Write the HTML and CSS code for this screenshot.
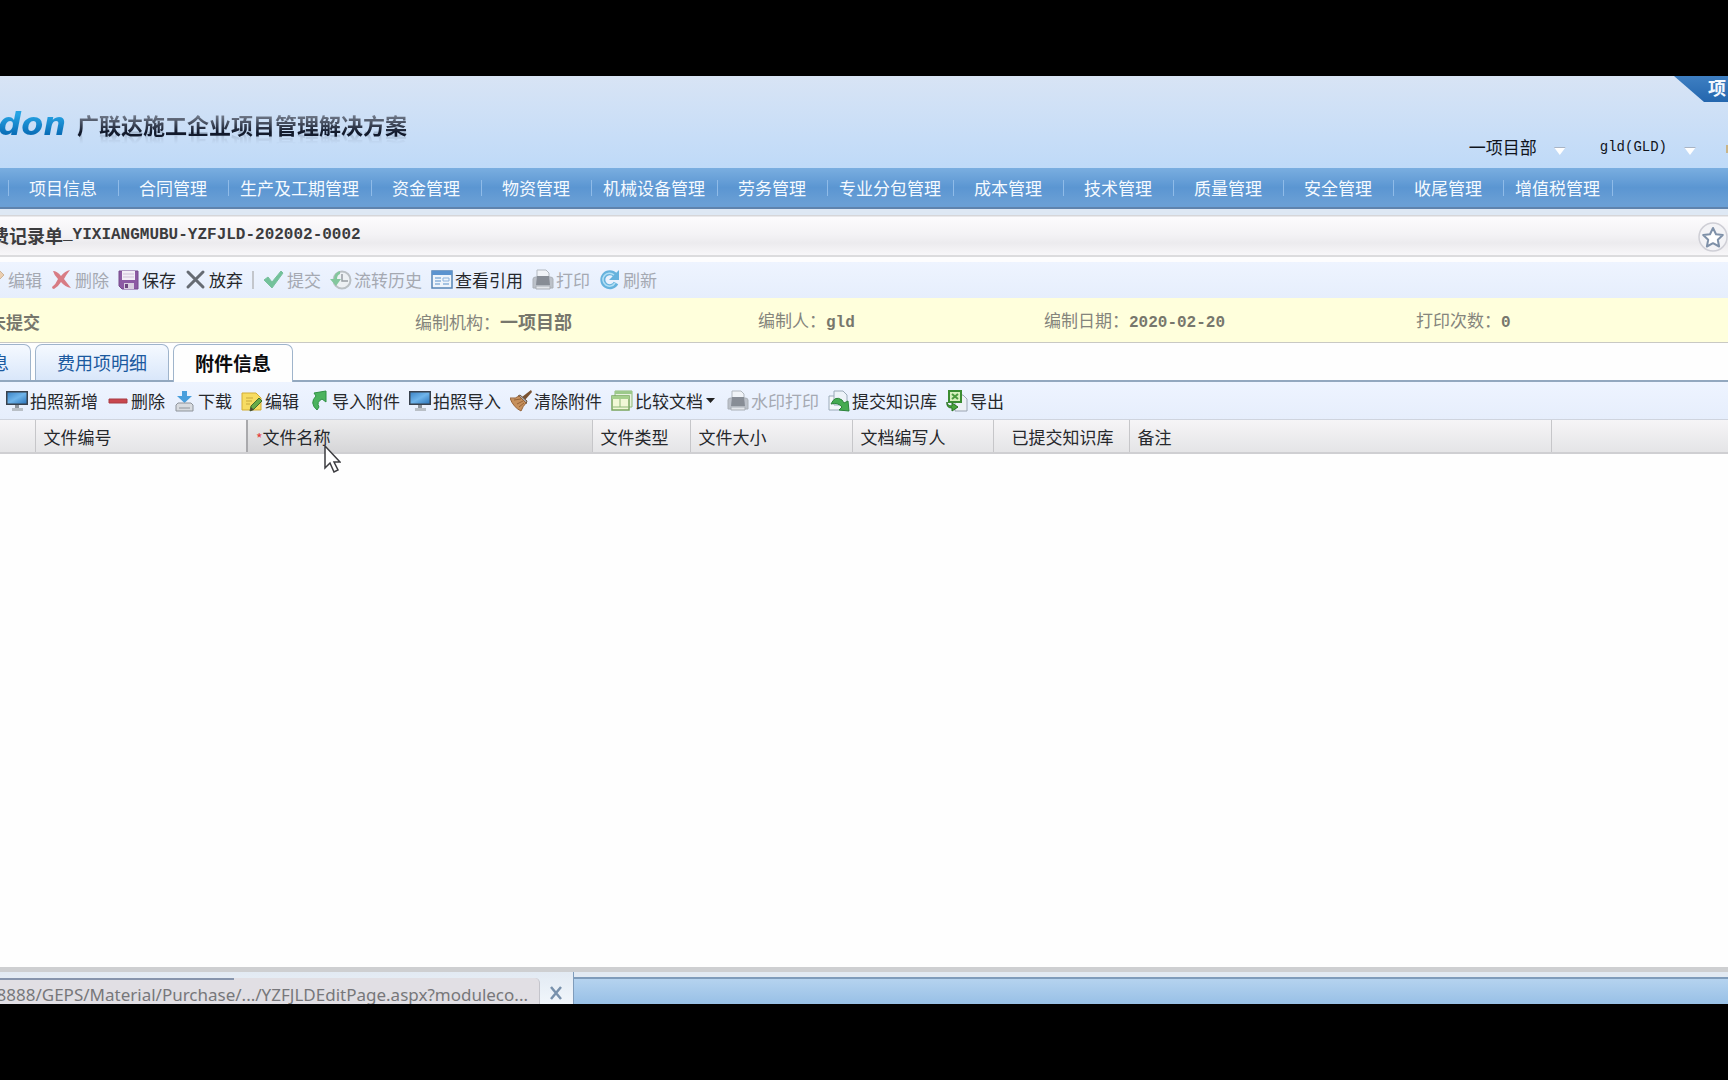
FILE: index.html
```html
<!DOCTYPE html>
<html lang="zh-CN">
<head>
<meta charset="utf-8">
<title>附件信息</title>
<link rel="stylesheet" href="styles.css">
</head>
<body>
<svg class="defs" aria-hidden="true">
  <defs>
    <linearGradient id="screen" x1="0" y1="0" x2="1" y2="1"><stop offset="0" stop-color="#3e86c8"/><stop offset=".5" stop-color="#6fb4ea"/><stop offset="1" stop-color="#2f78bd"/></linearGradient>
    <symbol id="monitor" viewBox="0 0 22 22"><path d="M0 1h22v14H0z" fill="#39424e"/><path d="M1.500 2.500h19v11h-19z" fill="url(#screen)"/><path d="M9 15h4v3H9z" fill="#8d949c"/><path d="M6 18h11v3H6z" fill="#b9bfc6"/></symbol>
    <symbol id="printer" viewBox="0 0 22 22"><path d="M5 1h9l3 3v7H5z" fill="#f2f4f6" stroke="#a9afb5"/><path d="M1 10q0-2 3-2h14q3 0 3 2v9H1z" fill="#b4b9c0" stroke="#a0a5ab"/><path d="M5 7h12l1 9H4z" fill="#777c84"/><path d="M4 17h14v3H4z" fill="#e3e5e8" stroke="#a0a5ab"/></symbol>
  </defs>
</svg>
<div class="app">
  <header class="banner">
    <div class="brand"><span class="logo">Glodon</span><h1>广联达施工企业项目管理解决方案</h1></div>
    <div class="account">
      <button class="pick">一项目部<i class="arrow"></i></button>
      <button class="pick user">gld(GLD)<i class="arrow"></i></button>
      <i class="dot"></i>
    </div>
    <a class="corner" href="#">项</a>
  </header>

  <nav class="menu">
    <a href="#">项目信息</a><a href="#">合同管理</a><a href="#">生产及工期管理</a><a href="#">资金管理</a><a href="#">物资管理</a><a href="#">机械设备管理</a><a href="#">劳务管理</a><a href="#">专业分包管理</a><a href="#">成本管理</a><a href="#">技术管理</a><a href="#">质量管理</a><a href="#">安全管理</a><a href="#">收尾管理</a><a href="#">增值税管理</a>
  </nav>

  <div class="titlebar">
    <h2>费记录单<span class="mono">_YIXIANGMUBU-YZFJLD-202002-0002</span></h2>
    <button class="fav" aria-label="收藏"><svg viewBox="0 0 30 30"><circle cx="15" cy="15" r="14" fill="#f3f3f6" stroke="#cfcfd6" stroke-width="1.500"/><path d="M15 6l3 6.200 6.800.8-5 4.700 1.300 6.800-6.100-3.300-6.100 3.300 1.300-6.800-5-4.700 6.800-.8z" fill="#fff" stroke="#7e90a8" stroke-width="2" stroke-linejoin="round"/></svg></button>
  </div>

  <div class="toolbar main-tools">
    <button disabled><svg viewBox="0 0 22 22"><path d="M4 18l2-6L16 2l4 4-10 10z" fill="#ecc9a4" stroke="#c8a988"/></svg>编辑</button>
    <button disabled><svg viewBox="0 0 22 22"><path d="M2 2q4 0 8 5 4-5 9-6-4 5-6 9 3 4 7 9-6-1-10-6-3 5-7 7-2 0-2-2 4-3 6-8-4-4-5-8z" fill="#d56870"/></svg>删除</button>
    <button><svg viewBox="0 0 22 22"><path d="M1 2h19v18H4l-3-3z" fill="#8c5aa3" stroke="#764a8c"/><path d="M4 2h13v9H4z" fill="#f2edf6"/><path d="M5 5h11M5 8h11" stroke="#cdbfd6"/><path d="M6 14h10v6H6z" fill="#d9cfe0"/><path d="M7 15h3v4H7z" fill="#6d4680"/></svg>保存</button>
    <button><svg viewBox="0 0 22 22"><path d="M3 3l15 15M18 3L3 18" stroke="#666b73" stroke-width="3" stroke-linecap="round"/></svg>放弃</button>
    <span class="sep"></span>
    <button disabled><svg viewBox="0 0 22 22"><path d="M1 11l4-3 4 5 9-11 2 2L9 19z" fill="#5fba8a" stroke="#64b88c"/></svg>提交</button>
    <button disabled><svg viewBox="0 0 22 22"><circle cx="12" cy="11" r="8.500" fill="#eef1f3" stroke="#b2b8bb" stroke-width="2"/><path d="M12 5v7h6" fill="none" stroke="#8a9094" stroke-width="1.500"/><path d="M10 2q-6 2-6 8H0l6 7 5-7H7q0-4 3-5z" fill="#72c08d"/></svg>流转历史</button>
    <button><svg viewBox="0 0 22 22"><path d="M1 2h20v17H1z" fill="#eef4fb" stroke="#5584b5" stroke-width="1.500"/><path d="M1 2h20v4H1z" fill="#5b93cf"/><path d="M4 9h6M4 12h6M4 15h5M12 15h6" stroke="#8bb1da" stroke-width="1.500"/><path d="M12 9h6v3h-6z" fill="none" stroke="#8bb1da"/></svg>查看引用</button>
    <button disabled><svg><use href="#printer"/></svg>打印</button>
    <button disabled><svg viewBox="0 0 22 22"><path d="M16 6a7 7 0 1 0 1 8" fill="none" stroke="#4fa8d8" stroke-width="5"/><path d="M20 1v10H10z" fill="#4fa8d8"/><path d="M15 6a6.500 6.500 0 1 0 1 8" fill="none" stroke="#a9dcf3" stroke-width="1.500"/></svg>刷新</button>
  </div>

  <div class="record">
    <div class="state"><b>未提交</b></div>
    <div>编制机构：<b class="org">一项目部</b></div>
    <div>编制人：<b class="mono">gld</b></div>
    <div>编制日期：<b class="mono">2020-02-20</b></div>
    <div>打印次数：<b class="mono">0</b></div>
  </div>

  <div class="tabs" role="tablist">
    <button class="tab first" role="tab">基本信息</button>
    <button class="tab" role="tab">费用项明细</button>
    <button class="tab active" role="tab" aria-selected="true">附件信息</button>
  </div>

  <div class="toolbar file-tools">
    <button><svg><use href="#monitor"/></svg>拍照新增</button>
    <button><svg viewBox="0 0 22 22"><path d="M2 9h18v4H2z" fill="#c9474f" stroke="#a93c45"/></svg>删除</button>
    <button><svg viewBox="0 0 22 22"><path d="M8 1h5v5h5l-7.500 7L3 6h5z" fill="#4a9fdc"/><path d="M2 15l2-2h13l2 2v6H2z" fill="#d8dbdf" stroke="#8e949b"/><path d="M5 18h11" stroke="#8e949b"/></svg>下载</button>
    <button><svg viewBox="0 0 22 22"><path d="M1 3h14l5 5v12H1z" fill="#f7dc62" stroke="#d3ad35"/><path d="M5 8h7M5 11h6M5 14h4" stroke="#c9a83c"/><path d="M9 21l1-5 8-8 3 3-8 8z" fill="#67ab48" stroke="#3f6e2f"/><path d="M9 21l1-4 3 3z" fill="#4b4335"/></svg>编辑</button>
    <button><svg viewBox="0 0 22 22"><path d="M9 20q-8-7-1-14L6 3l12-2v11l-4-3q-6 3-3 8z" fill="#4cb35e" stroke="#2f9144"/></svg>导入附件</button>
    <button><svg><use href="#monitor"/></svg>拍照导入</button>
    <button><svg viewBox="0 0 22 22"><path d="M21 0l1 2-7 8-3-3z" fill="#7a5231"/><path d="M10 5l7 6-1 3-8-8z" fill="#a9a9ae" stroke="#6f563f"/><path d="M0 8q6 1 9-2l7 7q-3 3-5 8Q3 17 0 8z" fill="#c6905c" stroke="#966338"/><path d="M4 10l7-1M7 14l6-3M9 17l5-4" stroke="#966338"/></svg>清除附件</button>
    <button><svg viewBox="0 0 22 22"><path d="M4 1h17v16H4z" fill="#e7f2df" stroke="#8fb879"/><path d="M4 1h17v3H4z" fill="#9cc98a"/><path d="M1 6h17v14H1z" fill="#f1f8d6" stroke="#79a55f" stroke-width="1.500"/><path d="M1 6h17v3H1z" fill="#a5cf8c"/><path d="M9 9v8M1 17h17" stroke="#8fb879"/></svg>比较文档<i class="drop"></i></button>
    <button disabled><svg><use href="#printer"/></svg>水印打印</button>
    <button><svg viewBox="0 0 22 22"><path d="M1 6h14v14H1z" fill="#f5f8fa" stroke="#9aaab8"/><path d="M6 1h9l4 4v10H6z" fill="#edf3f9" stroke="#9aaab8"/><path d="M3 14q4-9 11-4l2 3 4-2 1 10-10-1 3-3q-4-5-11-3z" fill="#45ab51" stroke="#2c843a"/></svg>提交知识库</button>
    <button><svg viewBox="0 0 22 22"><path d="M9 5h8l4 4v12H9z" fill="#eef1f6" stroke="#9aa4b2"/><path d="M3 1h12v11H3z" fill="#d8f0bd" stroke="#3b8c32" stroke-width="2"/><path d="M6 4l6 5M12 4L6 9" stroke="#4c9a3e" stroke-width="2"/><path d="M1 12q0 4 5 4v-3l6 4-6 4v-3q-6 0-5-6z" fill="#49a63c" stroke="#26701f"/></svg>导出</button>
  </div>

  <table class="files">
    <colgroup><col class="w-pick"><col class="w-code"><col class="w-name"><col class="w-type"><col class="w-size"><col class="w-author"><col class="w-kb"><col class="w-note"><col></colgroup>
    <thead><tr><th></th><th>文件编号</th><th class="hover"><span class="req">*</span>文件名称</th><th>文件类型</th><th>文件大小</th><th>文档编写人</th><th class="right">已提交知识库</th><th>备注</th><th></th></tr></thead>
  </table>
  <main class="blank"></main>

  <footer class="dock">
    <div class="page-tab"><button aria-label="关闭"><svg viewBox="0 0 14 14"><path d="M2 1l10 12M12 1L2 13" stroke="#7891ac" stroke-width="2.500"/></svg></button></div>
    <div class="status"><span>localhost:8888/GEPS/Material/Purchase/.../YZFJLDEditPage.aspx?moduleco...</span></div>
  </footer>

  <svg class="cursor" viewBox="0 0 17 28"><path d="M1 1v22l5-5 4 9 4-2-4-8h6z" fill="#fff" stroke="#3c3c40" stroke-width="1.500"/></svg>
</div>
</body>
</html>
```
FILE: styles.css
```css
* { box-sizing: border-box; }
body {
  margin: 0;
  min-height: 100vh;
  padding: 76px 0;
  display: flex;
  background: #000;
  color: #26282c;
  font: 17px/24px "Noto Sans CJK SC", sans-serif;
  overflow: hidden;
}
button {
  font: inherit;
  color: inherit;
  background: none;
  border: 0;
  padding: 0;
  white-space: nowrap;
}
a { color: inherit; text-decoration: none; }
h1, h2 { margin: 0; }
.defs { position: absolute; width: 0; height: 0; }
.mono { font-family: "Liberation Mono", monospace; font-size: 16px; }
.app {
  position: relative;
  flex: 1;
  min-width: 0;
  display: flex;
  flex-direction: column;
  background: #fefefe;
  overflow: hidden;
}

/* Banner */
.banner {
  position: relative;
  height: 92px;
  display: flex;
  justify-content: space-between;
  background: linear-gradient(#d8e4f5, #bfdaf8);
}
.brand {
  display: flex;
  align-items: center;
  gap: 11px;
  margin-left: -64px;
  padding-top: 4px;
}
.logo {
  width: 130px;
  display: flex;
  justify-content: flex-end;
  font: italic bold 32px/32px "DejaVu Sans", sans-serif;
  color: transparent;
  background: linear-gradient(#27a4e4 20%, #0a6fb8 80%);
  background-clip: text;
}
.brand h1 {
  font-size: 22px;
  line-height: 32px;
  color: transparent;
  background: linear-gradient(#788191 20%, #121a2c 75%);
  background-clip: text;
  -webkit-box-reflect: below -12px linear-gradient(transparent 50%, rgba(0, 0, 0, .25));
}
.account {
  display: flex;
  align-items: flex-end;
  gap: 34px;
  padding-bottom: 9px;
  color: #10141c;
}
.pick { display: flex; align-items: center; gap: 17px; }
.user { font: 14px/24px "Liberation Mono", monospace; }
.arrow {
  width: 12px;
  height: 8px;
  margin-top: 8px;
  background: #fff;
  border-top: 1px solid #a9b4c4;
  clip-path: polygon(0 0, 100% 0, 50% 100%);
}
.dot { width: 2px; height: 8px; margin: 0 0 6px -4px; background: #c9b487; }
.corner {
  position: absolute;
  top: 0;
  right: 0;
  width: 54px;
  height: 26px;
  padding-left: 34px;
  overflow: hidden;
  font-weight: bold;
  font-size: 18px;
  line-height: 22px;
  color: #f2f8ff;
  background: linear-gradient(#3e7fc2, #2466ae);
  clip-path: polygon(0 0, 100% 0, 100% 100%, 30px 100%);
}

/* Module menu */
.menu {
  height: 41px;
  display: flex;
  align-items: center;
  padding-left: 8px;
  background: linear-gradient(#7aaee0, #5b96d2 50%, #6a9fd5 90%);
  border-bottom: 2px solid #5f83ad;
  color: #f5faff;
}
.menu a {
  min-width: 110px;
  height: 16px;
  padding: 0 12px 0 11px;
  line-height: 16px;
  text-align: center;
  white-space: nowrap;
  border-left: 1px solid #8fbbe8;
}
.menu a:last-child { border-right: 1px solid #8fbbe8; }

/* Document title */
.titlebar {
  height: 48px;
  display: flex;
  align-items: center;
  justify-content: space-between;
  padding-top: 3px;
  border-top: 6px solid #dee8f4;
  border-bottom: 2px solid #dcdcde;
  background: linear-gradient(#d6d6d9 1px, #fcfbfd 2px, #f3f2f5 50%, #ecebee 70%, #f8f7f9);
  color: #3c3c3e;
}
.titlebar h2 {
  display: flex;
  font-size: 18px;
  line-height: 24px;
  margin: -3px 0 0 -9px;
}
.fav { width: 30px; height: 30px; }
.fav svg { display: block; }

/* Toolbars */
.toolbar {
  display: flex;
  align-items: center;
  gap: 9px;
  background: linear-gradient(#eef4ff, #e6eefc);
}
.main-tools {
  height: 41px;
  border-top: 5px solid #fdfdfe;
}
.main-tools button:first-child { margin-left: -16px; }
.file-tools { height: 38px; padding-left: 6px; border-bottom: 1px solid #cfd4de; }
.toolbar button { display: flex; align-items: center; gap: 2px; }
.toolbar button:disabled { color: #a5a9b2; }
.toolbar svg { width: 22px; height: 22px; }
.toolbar button:disabled svg { opacity: .85; }
.sep { width: 2px; height: 18px; background: #c3c6cc; }
.drop {
  width: 9px;
  height: 5px;
  margin: 0 3px 0 1px;
  background: #222;
  clip-path: polygon(0 0, 100% 0, 50% 100%);
}

/* Record summary */
.record {
  height: 45px;
  padding-top: 3px;
  display: grid;
  grid-template-columns: 415fr 343fr 286fr 372fr 312fr;
  align-items: center;
  background: #ffffdc;
  border-bottom: 1px solid #c9c9c4;
  color: #85857c;
}
.record b { color: #77776c; }
.record .org { font-size: 18px; }
.state { margin-left: -11px; }

/* Tabs */
.tabs {
  height: 39px;
  display: flex;
  gap: 4px;
  padding-top: 1px;
  border-bottom: 2px solid #93a8bf;
}
.tab {
  height: 36px;
  padding: 0 21px 2px;
  font-size: 18px;
  color: #1c5a9f;
  background: linear-gradient(#f5f9ff, #d9e7fa);
  border: 1px solid #9fb4cb;
  border-bottom: 0;
  border-radius: 7px 7px 0 0;
}
.first { margin-left: -85px; }
.active {
  height: 38px;
  font-size: 19px;
  font-weight: bold;
  color: #0c0c0e;
  background: #fefefe;
}

/* File list */
.files {
  width: 100%;
  table-layout: fixed;
  border-collapse: collapse;
}
.files tr { background: linear-gradient(#f6f5f7, #e4e4e6); }
.files th {
  height: 33px;
  padding: 2px 8px 0;
  font-weight: normal;
  text-align: left;
  white-space: nowrap;
  border-right: 1px solid #c6c6c9;
  border-bottom: 2px solid #cfcfd2;
}
.files th:last-child { border-right: 0; }
.files .hover { background: linear-gradient(#ececed, #d6d6d8); border-left: 2px solid #a9a9ac; }
.files .right { text-align: right; padding-right: 15px; }
.req { color: #e43c3c; font-size: 14px; }
.w-pick { width: 35px; }
.w-code { width: 212px; }
.w-name { width: 345px; }
.w-type { width: 98px; }
.w-size { width: 162px; }
.w-author { width: 141px; }
.w-kb { width: 136px; }
.w-note { width: 422px; }
.blank { flex: 1; }

/* Page dock */
.dock {
  position: relative;
  height: 37px;
  display: flex;
  border-top: 5px solid #cecfd1;
  background: linear-gradient(#e2eaf3 5px, #7f9cbb 5px, #7f9cbb 7px, #b5d3ef 7px, #98c0e6);
}
.page-tab {
  width: 574px;
  display: flex;
  align-items: center;
  justify-content: flex-end;
  padding: 10px 10px 0;
  background: linear-gradient(#e2eaf3, #f1f6fb);
  border-right: 1px solid #7f9cbb;
}
.page-tab button { width: 14px; height: 14px; }
.page-tab svg { display: block; }
.status {
  position: absolute;
  left: 0;
  bottom: 0;
  width: 540px;
  height: 26px;
  display: flex;
  justify-content: flex-end;
  padding-right: 11px;
  overflow: hidden;
  border-radius: 0 5px 0 0;
  border-right: 1px solid #c4c4cb;
  background: linear-gradient(90deg, #8795ad 234px, #e1dfe4 234px) top / 100% 2px no-repeat #e1dfe4;
  color: #77777a;
  font: 17px/34px "Noto Sans", sans-serif;
  white-space: nowrap;
}

.cursor { position: absolute; left: 324px; top: 369px; width: 17px; height: 28px; }
```
